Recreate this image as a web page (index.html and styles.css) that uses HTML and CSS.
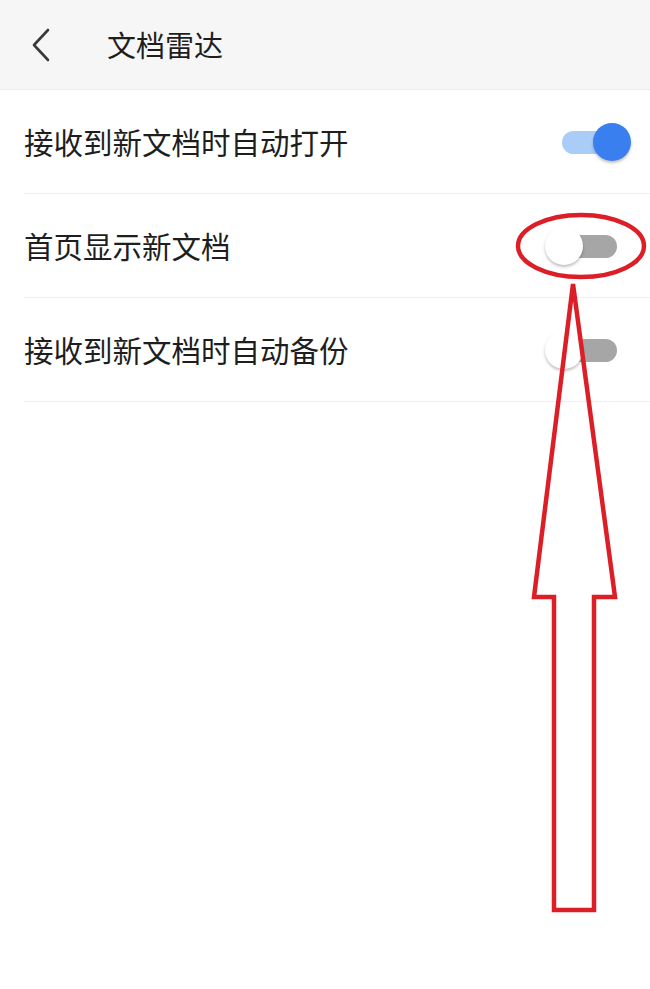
FILE: index.html
```html
<!DOCTYPE html>
<html lang="zh-CN">
<head>
<meta charset="utf-8">
<title>文档雷达</title>
<link rel="stylesheet" href="styles.css">
</head>
<body>
<div class="page">
  <header class="topbar">
    <span class="back">
      <svg width="20" height="34" viewBox="0 0 20 34"><path d="M17 2 L3 17 L17 32" fill="none" stroke="#3a3a3a" stroke-width="2.6" stroke-linecap="round" stroke-linejoin="round"/></svg>
    </span>
    <h1 class="title">文档雷达</h1>
  </header>
  <ul class="list">
    <li class="row">
      <span class="label">接收到新文档时自动打开</span>
      <span class="switch on"><span class="track"></span><span class="thumb"></span></span>
    </li>
    <li class="row">
      <span class="label">首页显示新文档</span>
      <span class="switch"><span class="track"></span><span class="thumb"></span></span>
    </li>
    <li class="row">
      <span class="label">接收到新文档时自动备份</span>
      <span class="switch"><span class="track"></span><span class="thumb"></span></span>
    </li>
  </ul>
  <svg class="annotation" width="650" height="989" viewBox="0 0 650 989">
    <ellipse cx="581" cy="246" rx="63" ry="31" fill="none" stroke="#dc1f27" stroke-width="4.5"/>
    <path d="M573 284 L615 597 L594 597 L594 910 L554 910 L554 597 L534 597 Z" fill="none" stroke="#dc1f27" stroke-width="4.5" stroke-linejoin="miter"/>
  </svg>
</div>
</body>
</html>
```
FILE: styles.css
```css
html, body {
  margin: 0;
  padding: 0;
  background: #ffffff;
}
body {
  font-family: "Noto Sans CJK SC", "Noto Sans", sans-serif;
  color: #1e1e1e;
}
.page {
  position: relative;
  width: 650px;
  height: 989px;
  overflow: hidden;
}
.topbar {
  height: 89px;
  background: #f6f6f6;
  border-bottom: 1px solid #ebebeb;
  display: flex;
  align-items: center;
}
.back {
  display: flex;
  margin-left: 31px;
  width: 20px;
  height: 34px;
}
.title {
  margin: 0 0 0 56px;
  font-size: 29px;
  font-weight: 400;
  line-height: 1;
  color: #1e1e1e;
}
.list {
  list-style: none;
  margin: 0;
  padding: 0 0 0 24px;
}
.row {
  height: 103px;
  border-bottom: 1px solid #eeeeee;
  display: flex;
  align-items: center;
  justify-content: space-between;
  padding-right: 19px;
}
.label {
  font-size: 29.5px;
  line-height: 1;
}
.switch {
  position: relative;
  width: 86px;
  height: 38px;
  display: block;
}
.track {
  position: absolute;
  left: 17px;
  right: 14px;
  top: 8px;
  height: 23px;
  border-radius: 12px;
  background: #a6a6a6;
}
.thumb {
  position: absolute;
  left: 0;
  top: 0;
  width: 38px;
  height: 38px;
  border-radius: 50%;
  background: #ffffff;
  box-shadow: 0 2px 3px rgba(0, 0, 0, 0.25);
}
.switch.on .track {
  background: #aacdf8;
}
.switch.on .thumb {
  left: auto;
  right: 0;
  background: #3a7ff0;
}
.annotation {
  position: absolute;
  left: 0;
  top: 0;
  pointer-events: none;
}
```
